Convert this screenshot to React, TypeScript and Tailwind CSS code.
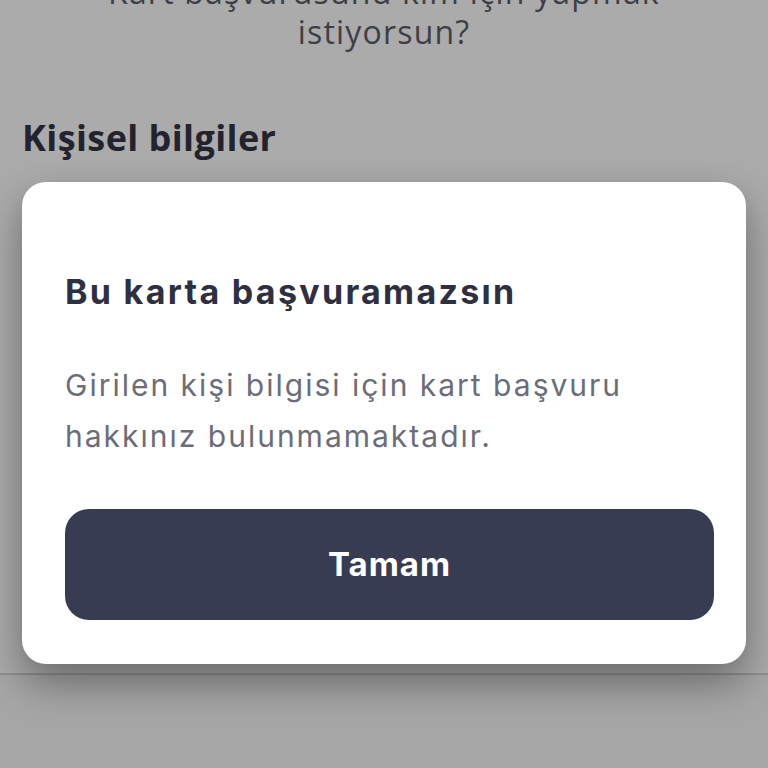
export default function App() {
  return (
    <div className="relative flex h-[768px] w-[768px] flex-col overflow-hidden bg-[#ababab]">
      {/* dimmed page behind the dialog */}
      <div className="flex flex-col" style={{ fontFamily: "'Open Sans', 'Noto Sans', sans-serif" }}>
        <p className="mt-[-28px] text-center text-[32px] leading-[40px] tracking-[1.2px] text-[#3e3e46]">
          Kart başvurusunu kim için yapmak
          <br />
          istiyorsun?
        </p>
        <h2 className="mt-[64px] px-[22px] text-[36px] font-bold leading-[44px] tracking-[0.4px] text-[#23232f]">
          Kişisel bilgiler
        </h2>
      </div>

      {/* dialog */}
      <div
        className="relative z-10 mx-[22px] mt-[22px] rounded-[24px] bg-white pb-[44px] pl-[43px] pr-[32px] pt-[90px] shadow-[0_18px_40px_rgba(0,0,0,0.38)]"
        style={{ fontFamily: "Inter, 'Noto Sans', sans-serif" }}
      >
        <h3 className="text-[34px] font-bold leading-[40px] tracking-[2.3px] text-[#2e3042]">
          Bu karta başvuramazsın
        </h3>
        <p className="mt-[48px] text-[30px] leading-[51px] tracking-[2px] text-[#6b6d78]">
          Girilen kişi bilgisi için kart başvuru
          <br />
          hakkınız bulunmamaktadır.
        </p>
        <button className="mt-[47px] flex h-[111px] w-full items-center justify-center rounded-[24px] bg-[#383c52] text-[33px] font-bold tracking-[1px] text-white">
          Tamam
        </button>
      </div>

      <div className="mt-[9px] h-[2px] w-full bg-[#8f8f8f]" />
      <div className="flex-1 bg-[#a6a6a6]" />
    </div>
  );
}
